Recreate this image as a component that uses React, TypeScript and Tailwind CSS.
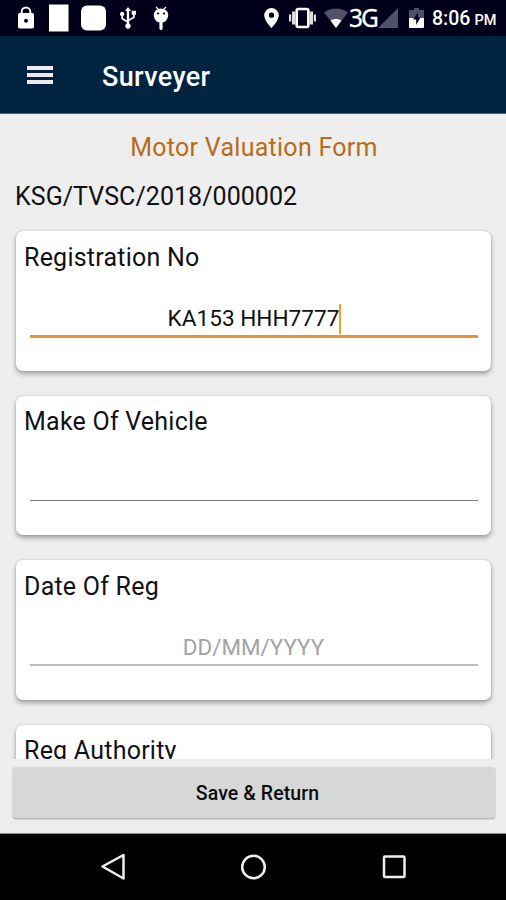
import type { ReactNode } from "react";

type Field = {
  label: string;
  value?: string;
  placeholder?: string;
  focused?: boolean;
};

const fields: Field[] = [
  { label: "Registration No", value: "KA153 HHH7777", focused: true },
  { label: "Make Of Vehicle" },
  { label: "Date Of Reg", placeholder: "DD/MM/YYYY" },
  { label: "Reg Authority" },
];

export default function App() {
  return (
    <div className="flex h-[900px] w-[506px] flex-col overflow-hidden bg-[#eeeeee] font-[Roboto,sans-serif] text-[#111115]">
      <StatusBar />
      <AppBar title="Surveyer" />

      <main className="flex h-[645px] flex-col overflow-hidden px-4">
        <h2 className="mt-[17px] pl-[2px] text-center text-[25px] leading-[34px] tracking-[0.27px] text-[#b66d17]">
          Motor Valuation Form
        </h2>
        <p className="-ml-[1px] mt-[15px] whitespace-nowrap text-[25px] leading-[34px] tracking-[0.05px]">
          KSG/TVSC/2018/000002
        </p>
        <div className="mt-[17px] flex flex-col gap-[25px]">
          {fields.map((field) => (
            <FieldCard key={field.label} field={field} />
          ))}
        </div>
      </main>

      <div className="flex h-[75px] flex-col border-b border-[#8c8c8c] pl-[13px] pr-[11px] pt-2">
        <button
          type="button"
          className="h-[51px] rounded-[3px] bg-[#d6d8d7] pl-[7px] pt-[2px] text-[19.5px] font-medium tracking-[0.1px] text-[#0c0c0c] shadow-[0_1px_2px_rgba(0,0,0,0.35)]"
        >
          Save &amp; Return
        </button>
      </div>
      <NavigationBar />
    </div>
  );
}

function underline(field: Field) {
  if (field.focused) return "h-[36px] border-b-[3px] border-[#e3982f] pt-[2px]";
  if (field.placeholder) return "h-[35px] border-b-2 border-[#bcbcbc]";
  return "h-[35px] border-b-[1.5px] border-[#808080]";
}

function FieldCard({ field }: { field: Field }) {
  return (
    <section className="flex h-[139.5px] w-[475px] shrink-0 flex-col rounded-[7px] bg-white px-2 shadow-[0_3px_5px_rgba(0,0,0,0.32),0_0_2px_rgba(0,0,0,0.18)]">
      <label className="mt-[9.5px] text-[25px] leading-[34px] tracking-[0.23px]">
        {field.label}
      </label>
      <div
        className={`mx-[5.5px] mt-[27px] flex items-center justify-center ${underline(field)}`}
      >
        <span
          className={
            field.value
              ? "ml-[2px] text-[22.6px] leading-[30px] text-[#111115]"
              : "text-[22.4px] leading-[30px] text-[#a3a3a3]"
          }
        >
          {field.value ?? field.placeholder}
        </span>
        {field.focused && <span className="h-[30px] w-[2px] bg-[#eba71c]" />}
      </div>
    </section>
  );
}

function AppBar({ title }: { title: string }) {
  return (
    <header className="flex h-[78px] items-center border-b border-[#50606d] bg-[#00233f] pl-[27px] pt-1">
      <div className="-mt-1 flex w-[26px] flex-col gap-[3px]">
        <span className="h-1 bg-[#eeeaf0]" />
        <span className="h-1 bg-[#eeeaf0]" />
        <span className="h-1 bg-[#eeeaf0]" />
      </div>
      <h1 className="ml-[49px] text-[27px] font-medium leading-9 tracking-[0.35px] text-white">
        {title}
      </h1>
    </header>
  );
}

function Icon({
  width,
  className,
  children,
}: {
  width: number;
  className: string;
  children: ReactNode;
}) {
  return (
    <svg
      width={width}
      height="36"
      viewBox={`0 0 ${width} 36`}
      className={`shrink-0 ${className}`}
      fill="white"
      aria-hidden="true"
    >
      {children}
    </svg>
  );
}

function StatusBar() {
  return (
    <div className="flex h-9 shrink-0 items-center bg-[#00001a] text-white">
      {/* Notifications */}
      <Icon width={16} className="ml-[18px]">
        <path d="M3.7 14v-2.2a4.3 4.3 0 0 1 8.6 0V14" fill="none" stroke="white" strokeWidth="2" />
        <rect y="13" width="16" height="15.5" rx="1.8" />
        <circle cx="8" cy="20.8" r="2" fill="#00001a" />
      </Icon>
      <Icon width={20} className="ml-[15px]">
        <rect y="4.5" width="19.5" height="27" />
      </Icon>
      <Icon width={25} className="ml-3">
        <rect y="5.5" width="25" height="25" rx="6" />
      </Icon>
      <Icon width={16} className="ml-3.5">
        <path d="M8 7l3 4H9.2v8.2l3.8-2.4v-2h-1.3v-4H16v4h-1.3v2.9L9.2 21v2.6a2.7 2.7 0 1 1-2.4 0V22.5L1.3 19v-3A2.2 2.2 0 1 1 3 16v2l3.8 2.5V11H5z" />
      </Icon>
      <Icon width={16} className="ml-[17px]">
        <path d="M3 7l3 3M13 7l-3 3" stroke="white" strokeWidth="1.2" />
        <path d="M.8 14.5a7.2 6 0 0 1 14.4 0c0 4-2.6 7.8-5.6 7.8v6a1.6 1.6 0 0 1-3.2 0v-6C3.4 22.3.8 18.5.8 14.5z" />
        <circle cx="5" cy="13.5" r="1.1" fill="#00001a" />
        <circle cx="11" cy="13.5" r="1.1" fill="#00001a" />
      </Icon>

      {/* System */}
      <Icon width={15} className="ml-[95px]">
        <path
          fillRule="evenodd"
          d="M7.5 8A7.3 7.3 0 0 0 .2 15.3C.2 20.7 7.5 28 7.5 28s7.3-7.3 7.3-12.7A7.3 7.3 0 0 0 7.5 8zm0 4.6a2.6 2.6 0 1 1 0 5.2 2.6 2.6 0 0 1 0-5.2z"
        />
      </Icon>
      <Icon width={27} className="ml-[10px]">
        <rect x="7.7" y="9" width="11.6" height="18" rx="1.5" fill="none" stroke="white" strokeWidth="2.6" />
        <path d="M3 11.5h3.6v13H3zM0 14.5h2.2v7H0zM20.4 11.5H24v13h-3.6zM24.8 14.5H27v7h-2.2z" fill="#dddde2" />
      </Icon>
      <Icon width={24} className="ml-2">
        <path d="M0 12.5C7 7 17 7 24 12.5L12 28z" fill="#51506a" />
        <path d="M6.5 20.5c3.2-2 7.8-2 11 0L12 28z" />
      </Icon>
      <span className="ml-[1px] w-[29px] whitespace-nowrap font-['Noto_Sans',sans-serif] text-[24.5px] leading-[36px] tracking-[-1.9px] [-webkit-text-stroke:0.3px_white]">
        3G
      </span>
      <Icon width={20} className="ml-0">
        <path d="M20 8v20H0z" fill="#51506a" />
      </Icon>
      <Icon width={15} className="ml-[11px]">
        <path d="M1 10h4V8h5v2h4a1 1 0 0 1 1 1v8H0v-8a1 1 0 0 1 1-1z" fill="#51506a" />
        <path d="M0 18h15v9a1 1 0 0 1-1 1H1a1 1 0 0 1-1-1z" />
        <path d="M9 12.5L4 19.5h3.2V25l4.3-7.5H9z" fill="#00001a" />
      </Icon>
      <span className="ml-[8px] whitespace-nowrap pt-[4px] text-[19.5px] font-medium leading-[32px]">
        8:06<span className="ml-[4px] text-[14.5px]">PM</span>
      </span>
    </div>
  );
}

function NavigationBar() {
  return (
    <nav className="flex h-[66px] shrink-0 items-center bg-black">
      <svg width="506" height="66" viewBox="0 0 506 66" fill="none" stroke="#eeeeee" strokeWidth="2.5">
        <path d="M102.5 32.5l21-11.5v23.5z" strokeLinejoin="round" />
        <circle cx="253.5" cy="33" r="11.3" />
        <rect x="384" y="22.5" width="20.5" height="20.5" rx="1" />
      </svg>
    </nav>
  );
}
